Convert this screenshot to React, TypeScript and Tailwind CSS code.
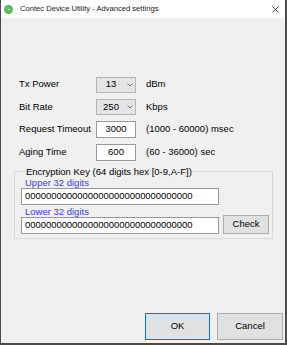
import React from "react";

const font = "font-['Liberation_Sans',Arial,sans-serif]";

function Chevron() {
  return (
    <svg width="6" height="4" viewBox="0 0 6 4" className="shrink-0">
      <path d="M0.5 0.5 L3 3 L5.5 0.5" fill="none" stroke="#606060" strokeWidth="0.9" />
    </svg>
  );
}

function Combo({ value }: { value: string }) {
  return (
    <div className="w-[40px] h-[16px] flex items-center bg-[#e5e5e5] border border-[#b4b4b4] text-black">
      <span className="w-[28px] text-center">{value}</span>
      <span className="flex-1 flex justify-center">
        <Chevron />
      </span>
    </div>
  );
}

function NumBox({ value }: { value: string }) {
  return (
    <div className="w-[40px] h-[17px] flex items-center justify-center bg-white border border-[#9a9a9a] text-black">
      {value}
    </div>
  );
}

const rows = [
  { label: "Tx Power", ctrl: <Combo value="13" />, unit: "dBm" },
  { label: "Bit Rate", ctrl: <Combo value="250" />, unit: "Kbps" },
  { label: "Request Timeout", ctrl: <NumBox value="3000" />, unit: "(1000 - 60000) msec" },
  { label: "Aging Time", ctrl: <NumBox value="600" />, unit: "(60 - 36000) sec" },
];

const zeros = "0".repeat(32);

export default function App() {
  return (
    <div className={`w-[287px] h-[345px] bg-[#f0f0f0] border-l border-r-2 border-b-2 border-[#4a4a4a] flex flex-col text-[9.5px] text-black ${font}`}>
      {/* Title bar */}
      <div className="h-[18px] bg-white flex items-center pl-[3px] pr-[6px] shrink-0">
        <div className="w-[9px] h-[9px] rounded-full bg-[#5cb85c] flex items-center justify-center">
          <div className="w-[2px] h-[1px] bg-[#d9f0d9]" />
        </div>
        <span className="ml-[7px] text-[7.6px] text-[#1a1a1a]">Contec Device Utility - Advanced settings</span>
        <svg width="7" height="7" viewBox="0 0 7 7" className="ml-auto">
          <path d="M0.5 0.5 L6.5 6.5 M6.5 0.5 L0.5 6.5" stroke="#333" strokeWidth="0.9" />
        </svg>
      </div>

      {/* Body */}
      <div className="flex-1 flex flex-col pt-[58px]">
        <div className="flex flex-col gap-[5.5px] pl-[18px]">
          {rows.map((r) => (
            <div key={r.label} className="h-[17px] flex items-center">
              <span className="w-[77px]">{r.label}</span>
              {r.ctrl}
              <span className="ml-[10px]">{r.unit}</span>
            </div>
          ))}
        </div>

        {/* Encryption key group */}
        <fieldset className="mt-[5px] ml-[13px] w-[259px] border border-[#dcd9d9] pl-[6px] pr-[3px] pb-[4px]">
          <legend className="ml-[4px] px-[1px] leading-[12px]">Encryption Key (64 digits hex [0-9,A-F])</legend>
          <div className="ml-[4px] -mt-[0.5px] leading-[11px] text-[#3c3cf0]">Upper 32 digits</div>
          <div className="w-[198px] h-[17px] flex items-center pl-[3px] bg-white border border-[#9a9a9a] tracking-[-0.05px]">
            {zeros}
          </div>
          <div className="ml-[4px] mt-[0.5px] leading-[11px] text-[#3c3cf0]">Lower 32 digits</div>
          <div className="flex items-end gap-[4px] -mt-[2px]">
            <div className="w-[198px] h-[17px] flex items-center pl-[3px] bg-white border border-[#9a9a9a] tracking-[-0.05px]">
              {zeros}
            </div>
            <button className="w-[46px] h-[19px] bg-[#e1e1e1] border border-[#adadad] text-black">Check</button>
          </div>
        </fieldset>

        <div className="flex-1" />

        {/* Dialog buttons */}
        <div className="flex justify-end gap-[7px] pr-[2px] pb-[3px]">
          <button className="w-[65px] h-[27px] bg-[#e1e1e1] border border-[#0078d7] text-black">OK</button>
          <button className="w-[66px] h-[27px] bg-[#e1e1e1] border border-[#adadad] text-black">Cancel</button>
        </div>
      </div>
    </div>
  );
}
